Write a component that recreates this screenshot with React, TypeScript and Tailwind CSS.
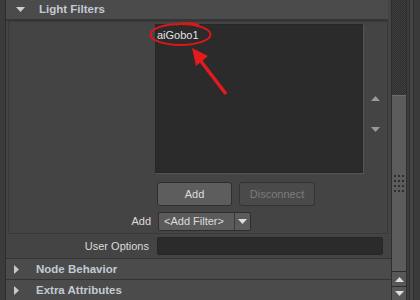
function TriDown({ className = "" }: { className?: string }) {
  return (
    <svg width="9" height="5" viewBox="0 0 9 5" className={className}>
      <path d="M0 0 H9 L4.5 5 Z" fill="currentColor" />
    </svg>
  );
}

function TriUp({ className = "" }: { className?: string }) {
  return (
    <svg width="9" height="5" viewBox="0 0 9 5" className={className}>
      <path d="M0 5 H9 L4.5 0 Z" fill="currentColor" />
    </svg>
  );
}

function TriRight({ className = "" }: { className?: string }) {
  return (
    <svg width="5" height="9" viewBox="0 0 5 9" className={className}>
      <path d="M0 0 V9 L5 4.5 Z" fill="currentColor" />
    </svg>
  );
}

function SectionHeader({ title }: { title: string }) {
  return (
    <div className="flex h-[21px] items-center border-t border-[#333333] bg-[#4b4b4b]">
      <TriRight className="ml-[8px] text-[#c8c8c8]" />
      <span className="ml-[17px] text-[11.5px] font-bold text-[#c3cad3]">{title}</span>
    </div>
  );
}

export default function App() {
  return (
    <div className="relative flex h-[300px] w-[420px] overflow-hidden bg-[#444444] font-['Liberation_Sans',Arial,sans-serif] text-[11px] text-[#dcdcdc]">
      {/* left edge */}
      <div className="w-[6px] shrink-0 border-r border-[#2c2c2c] bg-[#3b3b3b]" />

      {/* attribute editor column */}
      <div className="flex w-[385px] shrink-0 flex-col">
        {/* Light Filters header */}
        <div className="flex h-[21px] w-[382px] items-center border-b-2 border-[#353535] bg-[#4b4b4b]">
          <TriDown className="ml-[10px] text-[#cfcfcf]" />
          <span className="ml-[14px] text-[11.5px] font-bold text-[#c3cad3]">Light Filters</span>
        </div>

        {/* frame */}
        <div className="ml-[2px] w-[380px] border border-[#393939] pb-[2px]">
          <div className="flex">
            <div className="ml-[146px] mt-[2px] h-[149px] w-[208px] border border-[#272727] bg-[#2b2b2b] pl-[1px] pt-[3px] leading-[14px] text-[#e2e2e2] shadow-[1px_1px_0_#565656]">
              aiGobo1
            </div>
            <div className="ml-[8px] flex flex-col pt-[74px] text-[#9a9a9a]">
              <TriUp />
              <TriDown className="mt-[26px]" />
            </div>
          </div>

          {/* buttons */}
          <div className="ml-[148px] mt-[9px] flex gap-[7px]">
            <div className="flex h-[24px] w-[75px] items-center justify-center rounded-[3px] border border-[#2e2e2e] bg-[#5d5d5d] text-[#dcdcdc]">
              Add
            </div>
            <div className="flex h-[24px] w-[76px] items-center justify-center rounded-[3px] border border-[#333333] bg-[#4a4a4a] text-[#7c7c7c]">
              Disconnect
            </div>
          </div>

          {/* add filter */}
          <div className="mt-[6px] flex items-center gap-[7px]">
            <span className="w-[142px] text-right">Add</span>
            <div className="flex h-[19px] w-[93px] items-center rounded-[2px] border border-[#2e2e2e] bg-[#5b5b5b]">
              <span className="flex-1 pl-[5px]">&lt;Add Filter&gt;</span>
              <div className="flex h-full w-[16px] items-center justify-center border-l border-[#3a3a3a]">
                <TriDown className="text-[#dddddd]" />
              </div>
            </div>
          </div>
        </div>

        {/* user options */}
        <div className="flex h-[25px] items-center gap-[8px]">
          <span className="w-[143px] text-right">User Options</span>
          <div className="h-[18px] w-[226px] rounded-[2px] border border-[#262626] bg-[#2b2b2b]" />
        </div>

        <SectionHeader title="Node Behavior" />
        <SectionHeader title="Extra Attributes" />
      </div>

      {/* scrollbar */}
      <div className="flex w-[16px] shrink-0 flex-col border-x border-[#2e2e2e]">
        <div className="h-[95px] bg-[repeating-conic-gradient(#2f2f2f_0_25%,#3e3e3e_0_50%)] [background-size:2px_2px]" />
        <div className="flex h-[176px] flex-col items-center justify-center border-t border-[#6c6c6c] bg-[#5c5c5c]">
          <div className="grid grid-cols-3 gap-x-[2px] gap-y-[3px]">
            {Array.from({ length: 12 }).map((_, i) => (
              <div key={i} className="h-[2px] w-[2px] bg-[#2e2e2e]" />
            ))}
          </div>
        </div>
        <div className="flex h-[15px] items-center justify-center border-t border-[#2e2e2e] bg-[#575757] text-[#dedede]">
          <TriUp />
        </div>
        <div className="flex h-[14px] items-center justify-center border-t border-[#2e2e2e] bg-[#575757] text-[#dedede]">
          <TriDown />
        </div>
      </div>

      {/* right edge stripes */}
      <div className="flex flex-1">
        <div className="w-[2px] bg-[#3c3c3c]" />
        <div className="w-[1px] bg-[#2e2e2e]" />
        <div className="w-[3px] bg-[#454545]" />
        <div className="w-[1px] bg-[#2e2e2e]" />
        <div className="flex-1 bg-[#3a3a3a]" />
      </div>

      {/* red annotation */}
      <svg className="pointer-events-none absolute left-0 top-0" width="420" height="300">
        <ellipse cx="180.5" cy="34.5" rx="30" ry="10.5" fill="none" stroke="#dd1717" strokeWidth="2" />
        <path d="M176 24.5 Q190 22 199 25" fill="none" stroke="#dd1717" strokeWidth="2" />
        <line x1="226" y1="94" x2="200" y2="60" stroke="#e51b1b" strokeWidth="3.5" />
        <polygon points="192,48 208,56 196,66" fill="#e51b1b" />
      </svg>
    </div>
  );
}
